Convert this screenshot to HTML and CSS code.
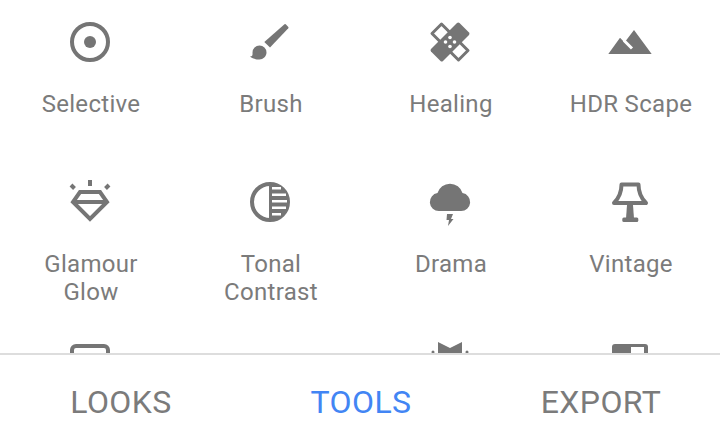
FILE: index.html
```html
<!DOCTYPE html>
<html lang="en">
  <head>
    <meta charset="UTF-8" />
    <title>Tools</title>
    <link rel="stylesheet" href="styles.css">
  </head>
  <body>
    <div class="tools">
      <div class="tool">
        <svg class="icon" viewBox="0 0 40 40"><circle class="line" cx="20" cy="20" r="18" /><circle cx="20" cy="20" r="6" /></svg>
        <span>Selective</span>
      </div>
      <div class="tool">
        <svg class="icon" viewBox="0 0 40 40"><path d="M34.500 2.200a1 1 0 0 1 1.200 0l2.600 2.800a1 1 0 0 1 0 1.300L20 25.500 14.300 20z" /><path d="M9.500 23.500a7 7 0 0 1 7 7c0 4-3.500 7-7 7-3.500 0-7-1-9.500-3 3-.5 2.500-2 2.500-4a7 7 0 0 1 7-7z" /></svg>
        <span>Brush</span>
      </div>
      <div class="tool">
        <svg class="icon" viewBox="0 0 40 40">
          <path class="line thin" d="M11.500 2L2 11.500 11 20.500 20.500 11z" />
          <path class="line thin" d="M28.500 38L38 28.500 29 19.500 19.500 29z" />
          <path d="M27 1a2 2 0 0 1 2.500 0l9.500 9.500a2 2 0 0 1 0 2.500L13 39a2 2 0 0 1-2.500 0L1 29.500a2 2 0 0 1 0-2.500z" />
          <g class="holes"><circle cx="20" cy="15.500" r="1.800" /><circle cx="15.500" cy="20" r="1.800" /><circle cx="24.500" cy="20" r="1.800" /><circle cx="20" cy="24.500" r="1.800" /></g>
        </svg>
        <span>Healing</span>
      </div>
      <div class="tool">
        <svg class="icon" viewBox="0 0 40 40"><path d="M-1.700 32L10 15.700l4.500 4.800L24 8l17.700 24z" /><path class="cut" d="M14 18.500l8 8" /></svg>
        <span>HDR Scape</span>
      </div>

      <div class="tool">
        <svg class="icon" viewBox="0 0 40 40">
          <path class="line" d="M10 10H30L37 20 20 37 3 20zM3 20H37" />
          <path class="line" d="M20 -2V4M1 3L4.500 6.500M39 3L35.500 6.500" />
        </svg>
        <span>Glamour<br />Glow</span>
      </div>
      <div class="tool">
        <svg class="icon" viewBox="0 0 40 40">
          <circle class="line" cx="20" cy="20" r="18" />
          <path d="M19 2h1a18 18 0 0 1 0 36h-1z" />
          <g class="holes"><rect x="22" y="5" width="9" height="2.500" /><rect x="22" y="11.500" width="14" height="2.500" /><rect x="22" y="18" width="15" height="2.500" /><rect x="22" y="24.500" width="14" height="2.500" /><rect x="22" y="31" width="9" height="2.500" /></g>
        </svg>
        <span>Tonal<br />Contrast</span>
      </div>
      <div class="tool">
        <svg class="icon" viewBox="0 0 40 40"><path d="M9 29a9 9 0 0 1-1.500-17.900A13 13 0 0 1 32.500 11.100 9 9 0 0 1 31 29z" /><path d="M17 32h6l-2 5h2.500L18 44l1-6h-2.500z" /></svg>
        <span>Drama</span>
      </div>
      <div class="tool">
        <svg class="icon" viewBox="0 0 40 40">
          <path class="line round" d="M11.500 2.500H28.500C28.500 10 31 16 36 21H4C9 16 11.500 10 11.500 2.500Z" />
          <path d="M17 23h6l1 13.500h-8z" /><rect x="12.300" y="35.500" width="16" height="4.500" rx="1.500" />
        </svg>
        <span>Vintage</span>
      </div>

      <div class="tool">
        <svg class="icon" viewBox="0 0 40 40"><rect class="line" x="2" y="4" width="36" height="30" rx="4" /></svg>
      </div>
      <div class="tool"></div>
      <div class="tool">
        <svg class="icon" viewBox="0 0 40 40"><path d="M8 0l12 6 12-6v16H8z" /><circle cx="3" cy="10" r="1.500" /><circle cx="37" cy="10" r="1.500" /></svg>
      </div>
      <div class="tool">
        <svg class="icon" viewBox="0 0 40 40"><path d="M5 2h30a3 3 0 0 1 3 3v30H2V5a3 3 0 0 1 3-3zM21 5v30h13V5z" fill-rule="evenodd" /></svg>
      </div>
    </div>

    <div class="tabs">
      <div class="tab">LOOKS</div>
      <div class="tab active">TOOLS</div>
      <div class="tab">EXPORT</div>
    </div>
  </body>
</html>
```

FILE: styles.css
```css
* {
  box-sizing: border-box;
  padding: 0;
  margin: 0;
}
body {
  width: 720px;
  height: 440px;
  overflow: hidden;
  background-color: #fff;
  font-family: Roboto, sans-serif;
  color: #7b7b7b;
}
.tools {
  height: 353px;
  overflow: hidden;
  padding-top: 22px;
  display: grid;
  grid-template-columns: repeat(4, 180px);
  grid-auto-rows: 160px;
}
.tool {
  display: flex;
  flex-direction: column;
  align-items: center;
  gap: 28px;
  font-size: 24px;
  line-height: 28px;
  letter-spacing: 0.3px;
  text-align: center;
}
.tool span {
  padding-left: 2px;
}
.icon {
  width: 40px;
  height: 40px;
  flex: none;
  overflow: visible;
  fill: #757575;
}
.icon .line {
  fill: none;
  stroke: #757575;
  stroke-width: 4;
}
.icon .thin {
  fill: #fff;
  stroke-width: 3;
  stroke-linejoin: round;
}
.icon .round {
  stroke-linejoin: round;
}
.icon .holes {
  fill: #fff;
}
.icon .cut {
  fill: none;
  stroke: #fff;
  stroke-width: 3;
}
.tabs {
  height: 87px;
  border-top: 2px solid #ddd;
  padding-top: 28px;
  display: flex;
}
.tab {
  width: 240px;
  padding-left: 2px;
  text-align: center;
  font-size: 32px;
  line-height: 38px;
  letter-spacing: 0.4px;
}
.tab.active {
  color: #4285f4;
}
```
